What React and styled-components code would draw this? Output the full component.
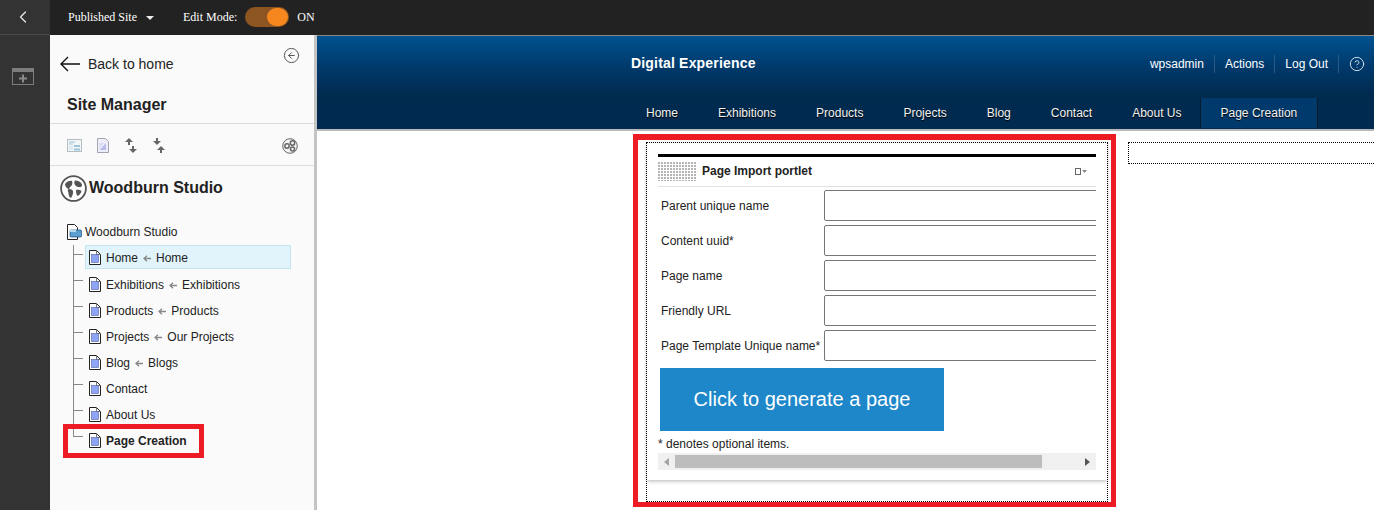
import React from "react"
import styled, { createGlobalStyle } from "styled-components"
import { ChevronLeft, CircleArrowLeft, CircleHelp } from "lucide-react"

const GlobalStyle = createGlobalStyle`
  html, body {
    margin: 0;
    padding: 0;
    background: #fff;
    overflow: hidden;
  }
  * {
    box-sizing: border-box;
  }
`

const Page = styled.div`
  width: 1374px;
  height: 510px;
  display: grid;
  grid-template-columns: 50px 267px 1fr;
  grid-template-rows: 35px 1fr;
  overflow: hidden;
  font-family: "Liberation Sans", Arial, sans-serif;
  font-size: 12px;
  color: #222;
`

const BackCell = styled.div`
  background: #333;
  border-bottom: 1px solid #4a4a4a;
  color: #e8e8e8;
  display: flex;
  align-items: center;
  justify-content: center;
  padding-right: 5px;
  padding-bottom: 1px;
`

const TopBar = styled.div`
  grid-column: 2 / 4;
  background: #222;
  color: #fff;
  display: flex;
  align-items: center;
  padding: 0 0 1px 18px;
  font-family: "Liberation Serif", "Times New Roman", serif;
  font-size: 12px;
`

const Caret = styled.span`
  width: 0;
  height: 0;
  margin: 2px 0 0 9px;
  border-left: 4px solid transparent;
  border-right: 4px solid transparent;
  border-top: 4px solid #eee;
`

const EditLabel = styled.span`
  margin-left: 29px;
`

const Toggle = styled.span`
  width: 44px;
  height: 20px;
  margin: 0 8px;
  padding: 1px;
  border-radius: 10px;
  background: #8c5522;
  display: flex;
  justify-content: flex-end;
`

const Knob = styled.span`
  width: 21px;
  height: 18px;
  border-radius: 9px;
  background: #f6871f;
`

const Rail = styled.div`
  background: #333;
  padding: 33px 0 0 12px;
`

const Sidebar = styled.aside`
  position: relative;
  background: #fafafa;
  border-right: 3px solid #c4c4c4;
  display: flex;
  flex-direction: column;
  padding-top: 1px;
`

const BackRow = styled.div`
  height: 55px;
  display: flex;
  align-items: center;
  justify-content: space-between;
  padding: 0 14px 0 10px;
`

const BackLink = styled.div`
  display: flex;
  align-items: center;
  gap: 8px;
  font-size: 14px;
  color: #222;
`

const Collapse = styled.span`
  align-self: flex-start;
  margin-top: 11px;
  color: #555;
  line-height: 0;
`

const PanelTitle = styled.h2`
  margin: 0;
  height: 33px;
  padding: 5px 0 0 17px;
  font-size: 16px;
  line-height: 18px;
  font-weight: bold;
  color: #222;
  border-bottom: 1px solid #ddd;
`

const Toolbar = styled.div`
  height: 42px;
  display: flex;
  align-items: center;
  padding: 2px 16px 0 17px;
  border-bottom: 1px solid #ddd;
`

const ToolIcon = styled.svg`
  display: block;
  margin-right: ${(p) => p.$gap || 0}px;
  margin-left: ${(p) => (p.$push ? "auto" : "0")};
`

const SiteHeading = styled.div`
  height: 44px;
  display: flex;
  align-items: center;
  gap: 2px;
  padding-left: 10px;
  font-size: 16px;
  font-weight: bold;
  color: #222;
`

const TreeRoot = styled.div`
  margin: 9px 0 1px 17px;
  height: 25px;
  display: flex;
  align-items: center;
  gap: 3px;
`

const Tree = styled.ul`
  list-style: none;
  margin: 0 0 0 23px;
  padding: 0;
`

const TreeRow = styled.li`
  height: 26px;
  display: flex;
  --tick: ${(p) => (p.$last ? "linear-gradient(#888, #888) 0 0 / 1px 10px no-repeat" : "linear-gradient(#888, #888) 0 0 / 1px 100% no-repeat")};
`

const Connector = styled.span`
  width: 12px;
  flex: none;
  background: var(--tick), linear-gradient(#888, #888) 0 9px / 10px 1px no-repeat;
`

const NodeLabel = styled.span`
  width: 206px;
  height: ${(p) => (p.$selected ? "24px" : "26px")};
  display: flex;
  align-items: center;
  gap: 5px;
  padding: 2px 0 0 3px;
  font-weight: ${(p) => (p.$bold ? "bold" : "normal")};
  background: ${(p) => (p.$selected ? "#e1f4fb" : "transparent")};
  border: 1px solid ${(p) => (p.$selected ? "#c6e2ec" : "transparent")};
  color: #222;
`

const PageGlyph = styled.svg`
  flex: none;
  margin-top: -2px;
`

const Highlight = styled.div`
  position: absolute;
  left: 13px;
  top: 389px;
  width: 141px;
  height: 34px;
  border: 5px solid #ed1c24;
  pointer-events: none;
`

const Main = styled.main`
  display: flex;
  flex-direction: column;
  min-width: 0;
  overflow: hidden;
`

const Banner = styled.header`
  border-top: 1px solid #8a8a8a;
  border-bottom: 2px solid #b8b8b8;
  background: linear-gradient(#00528f 0, #003a6c 30px, #012a4f 59px, #002a4f 100%);
`

const BrandRow = styled.div`
  height: 59px;
  display: flex;
  align-items: center;
  justify-content: space-between;
  padding: 0 9px 4px 314px;
  color: #fff;
`

const Brand = styled.div`
  margin-top: -1px;
  font-size: 14px;
  font-weight: bold;
  letter-spacing: 0.18px;
`

const UserMenu = styled.div`
  display: flex;
  align-items: center;
`

const UserItem = styled.span`
  height: 18px;
  display: flex;
  align-items: center;
  padding: 0 10px;
  border-right: 1px solid #2b5b84;
  &:last-child {
    border-right: 0;
    padding-right: 0;
  }
`

const Nav = styled.nav`
  height: 34px;
  display: flex;
  padding: 3px 0 0 309px;
`

const NavItem = styled.span`
  height: 30px;
  display: flex;
  align-items: center;
  padding: 0 ${(p) => (p.$active ? 21 : 20)}px;
  margin-left: ${(p) => (p.$active ? -2 : 0)}px;
  color: #f2f2f2;
  text-shadow: 0 1px 1px #000;
  background: ${(p) => (p.$active ? "#003a6c" : "transparent")};
  box-shadow: ${(p) => (p.$active ? "inset 1px 0 #0b1c2c, inset -1px 0 #0b1c2c" : "none")};
`

const Content = styled.div`
  display: flex;
  align-items: flex-start;
  padding: 3px 0 0 316px;
`

const RedFrame = styled.section`
  width: 483px;
  height: 373px;
  flex: none;
  border: 5px solid #ed1c24;
  border-top-width: 6px;
  padding: 2px 3px 0 8px;
`

const DottedZone = styled.div`
  height: 100%;
  border: 1px dotted #000;
`

const Portlet = styled.div`
  height: 337px;
  background: #fff;
  padding: 11px 11px 0;
  box-shadow: 0 1px 4px rgba(0, 0, 0, 0.3);
`

const PortletHead = styled.div`
  height: 33px;
  padding-bottom: 1px;
  border-top: 3px solid #000;
  border-bottom: 1px solid #e2e2e2;
  display: flex;
  align-items: center;
  gap: 5px;
  font-weight: bold;
  color: #222;
`

const Grip = styled.span`
  width: 39px;
  height: 19px;
  background-image: conic-gradient(at 2px 2px, transparent 75%, #b5b5b5 0);
  background-size: 3px 3px;
`

const PortletMenu = styled.svg`
  margin-left: auto;
  margin-right: 8px;
`

const FormClip = styled.div`
  overflow: hidden;
  padding-top: 3px;
  height: 250px;
`

const FormRow = styled.div`
  height: 31px;
  margin-bottom: 4px;
  display: grid;
  grid-template-columns: 166px 300px;
  align-items: center;
`

const FieldLabel = styled.label`
  padding-left: 3px;
  color: #222;
`

const FieldInput = styled.input`
  width: 300px;
  height: 31px;
  padding: 0;
  border: 1px solid #767676;
  border-radius: 2px;
  background: #fff;
  outline: 0;
`

const GenerateButton = styled.button`
  display: block;
  width: 284px;
  height: 63px;
  margin: 7px 0 0 2px;
  border: 0;
  background: #1e87c9;
  color: #fff;
  font-family: inherit;
  font-size: 20px;
`

const Note = styled.div`
  margin: -1px 0 1px;
  line-height: 16px;
  color: #222;
`

const ScrollBar = styled.div`
  height: 17px;
  background: #f0f0f0;
  display: flex;
  align-items: center;
  padding: 0 6px;
  gap: 6px;
`

const ScrollThumb = styled.span`
  width: 367px;
  height: 13px;
  margin-right: auto;
  background: #bdbdbd;
`

const ScrollArrow = styled.span`
  width: 0;
  height: 0;
  border-top: 4px solid transparent;
  border-bottom: 4px solid transparent;
  border-left: ${(p) => (p.$right ? "5px solid #555" : "0")};
  border-right: ${(p) => (p.$right ? "0" : "5px solid #a3a3a3")};
`

const EmptyZone = styled.div`
  width: 300px;
  height: 22px;
  flex: none;
  margin: 8px 0 0 12px;
  border: 1px dotted #000;
`

const PageIcon = () => (
  <PageGlyph width="12" height="15" viewBox="0 0 12 15">
    <path d="M.5.5h7l4 4v10H.5z" fill="#fff" stroke="#222" />
    <path d="M7.5.5v4h4" fill="none" stroke="#777" />
    <rect x="2.5" y="4.5" width="7" height="8" fill="#8ea4f5" stroke="#3a4a90" strokeWidth=".5" />
  </PageGlyph>
)

const RefArrow = () => (
  <svg width="8" height="7" viewBox="0 0 8 7">
    <path d="M8 3.5H2M4 .8 1 3.5 4 6.2" fill="none" stroke="#888" strokeWidth="1.3" />
  </svg>
)

const Globe = () => (
  <svg width="27" height="27" viewBox="0 0 27 27">
    <circle cx="13.5" cy="13.5" r="12.4" fill="#fff" stroke="#555" strokeWidth="1.8" />
    <path d="M5 9c2-3 5-3.5 7-3 1 2 0 5-2 6-1 3-2 2-3 1-1-1-2-2-2-4z" fill="#555" />
    <path d="M15 5.5c3 0 6 1.5 7 4 .5 2-1.5 3-3.5 2.5-2 0-3.5-1.5-4-3-.5-1.5 0-2.5.5-3.5z" fill="#555" />
    <path d="M8 14.5c2-1 4 0 5 1.5.5 2-.5 4.5-2 7-2-.5-2.5-3-2.5-5-.5-1.5-1-2.5-.5-3.5z" fill="#555" />
    <path d="M16 15c2-.5 4.5 0 5.5 1-.5 2.5-2 4-4 5-1-1-1.5-3-1.5-6z" fill="#555" />
  </svg>
)

const AddPageIcon = () => (
  <svg width="23" height="18" viewBox="0 0 23 18" fill="none">
    <rect x=".5" y=".5" width="21" height="16" stroke="#7d7d7d" />
    <rect x="1" y="1" width="20" height="3" fill="#7d7d7d" />
    <path d="M11 6.5v8M7 10.5h8" stroke="#8a8a8a" strokeWidth="2" />
  </svg>
)

const SwapIcon = ({ flip, gap }) => (
  <ToolIcon $gap={gap} width="14" height="15" viewBox="0 0 14 15">
    {flip ? (
      <path d="M4 0h2v3h3L5 7 1 3h3zM9 8l4 4h-3v3H8v-3H5z" fill="#666" />
    ) : (
      <path d="M5 0l4 4H6v3H4V4H1zM8 8h2v3h3l-4 4-4-4h3z" fill="#666" />
    )}
  </ToolIcon>
)

const navItems = ["Home", "Exhibitions", "Products", "Projects", "Blog", "Contact", "About Us"]

const pages = [
  { name: "Home", ref: "Home", selected: true },
  { name: "Exhibitions", ref: "Exhibitions" },
  { name: "Products", ref: "Products" },
  { name: "Projects", ref: "Our Projects" },
  { name: "Blog", ref: "Blogs" },
  { name: "Contact" },
  { name: "About Us" },
  { name: "Page Creation", bold: true, last: true },
]

const fields = [
  "Parent unique name",
  "Content uuid*",
  "Page name",
  "Friendly URL",
  "Page Template Unique name*",
]

export default () => {
  return (
    <Page>
      <GlobalStyle />
      <BackCell>
        <ChevronLeft size={20} strokeWidth={1.5} />
      </BackCell>
      <TopBar>
        Published Site
        <Caret />
        <EditLabel>Edit Mode:</EditLabel>
        <Toggle>
          <Knob />
        </Toggle>
        ON
      </TopBar>

      <Rail>
        <AddPageIcon />
      </Rail>

      <Sidebar>
        <BackRow>
          <BackLink>
            <svg width="20" height="16" viewBox="0 0 20 16" fill="none">
              <path d="M20 8H1M8 1 1 8l7 7" stroke="#111" strokeWidth="1.4" />
            </svg>
            Back to home
          </BackLink>
          <Collapse>
            <CircleArrowLeft size={17} strokeWidth={1.4} />
          </Collapse>
        </BackRow>
        <PanelTitle>Site Manager</PanelTitle>
        <Toolbar>
          <ToolIcon $gap={15} width="15" height="13" viewBox="0 0 15 13">
            <rect x=".5" y=".5" width="14" height="12" fill="#f2f6f7" stroke="#b4bec2" />
            <path d="M2 3h6M2 5h4" stroke="#9cc6d8" />
            <rect x="7" y="6" width="6" height="2" fill="#9cc6d8" />
            <rect x="7" y="9.5" width="6" height="2" fill="#9cc6d8" />
            <rect x="2" y="7" width="4" height="4" fill="#dcebf1" />
          </ToolIcon>
          <ToolIcon $gap={15} width="12" height="15" viewBox="0 0 12 15">
            <path d="M.5.5h8l3 3v11H.5z" fill="#eeeef8" stroke="#a4a4b0" />
            <path d="M2.5 12 9 5v7z" fill="#b8bcec" />
            <path d="M2.5 5H7L2.5 10z" fill="#d6d8f4" />
          </ToolIcon>
          <SwapIcon gap={14} />
          <SwapIcon flip />
          <ToolIcon $push width="16" height="16" viewBox="0 0 16 16">
            <circle cx="8" cy="8" r="7.3" fill="#f4f4f4" stroke="#666" />
            <circle cx="10.5" cy="5" r="2.2" fill="none" stroke="#666" strokeWidth="1.5" />
            <circle cx="5" cy="8" r="2.2" fill="none" stroke="#666" strokeWidth="1.5" />
            <circle cx="10.5" cy="11" r="2" fill="none" stroke="#666" strokeWidth="1.5" />
          </ToolIcon>
        </Toolbar>
        <SiteHeading>
          <Globe />
          Woodburn Studio
        </SiteHeading>
        <TreeRoot>
          <svg width="15" height="16" viewBox="0 0 15 16">
            <path d="M.5.5h7l3 3v12H.5z" fill="#fff" stroke="#222" />
            <rect x="3" y="6" width="11.5" height="7" rx="1" fill="#5d9fd0" stroke="#1e4f78" strokeWidth=".7" />
            <rect x="3" y="6" width="6" height="2" fill="#b6d8ee" />
          </svg>
          Woodburn Studio
        </TreeRoot>
        <Tree>
          {pages.map((p) => (
            <TreeRow key={p.name} $last={p.last}>
              <Connector />
              <NodeLabel $selected={p.selected} $bold={p.bold}>
                <PageIcon />
                {p.name}
                {p.ref && <RefArrow />}
                {p.ref}
              </NodeLabel>
            </TreeRow>
          ))}
        </Tree>
        <Highlight />
      </Sidebar>

      <Main>
        <Banner>
          <BrandRow>
            <Brand>Digital Experience</Brand>
            <UserMenu>
              <UserItem>wpsadmin</UserItem>
              <UserItem>Actions</UserItem>
              <UserItem>Log Out</UserItem>
              <UserItem>
                <CircleHelp size={16} strokeWidth={1.2} />
              </UserItem>
            </UserMenu>
          </BrandRow>
          <Nav>
            {navItems.map((item) => (
              <NavItem key={item}>{item}</NavItem>
            ))}
            <NavItem $active>Page Creation</NavItem>
          </Nav>
        </Banner>
        <Content>
          <RedFrame>
            <DottedZone>
              <Portlet>
                <PortletHead>
                  <Grip />
                  Page Import portlet
                  <PortletMenu width="13" height="7" viewBox="0 0 13 7">
                    <rect x=".5" y=".5" width="5" height="6" fill="none" stroke="#666" />
                    <path d="M7 2h5L9.5 5z" fill="#888" />
                  </PortletMenu>
                </PortletHead>
                <FormClip>
                  {fields.map((field) => (
                    <FormRow key={field}>
                      <FieldLabel>{field}</FieldLabel>
                      <FieldInput aria-label={field} />
                    </FormRow>
                  ))}
                  <GenerateButton>Click to generate a page</GenerateButton>
                </FormClip>
                <Note>* denotes optional items.</Note>
                <ScrollBar>
                  <ScrollArrow />
                  <ScrollThumb />
                  <ScrollArrow $right />
                </ScrollBar>
              </Portlet>
            </DottedZone>
          </RedFrame>
          <EmptyZone />
        </Content>
      </Main>
    </Page>
  )
}
